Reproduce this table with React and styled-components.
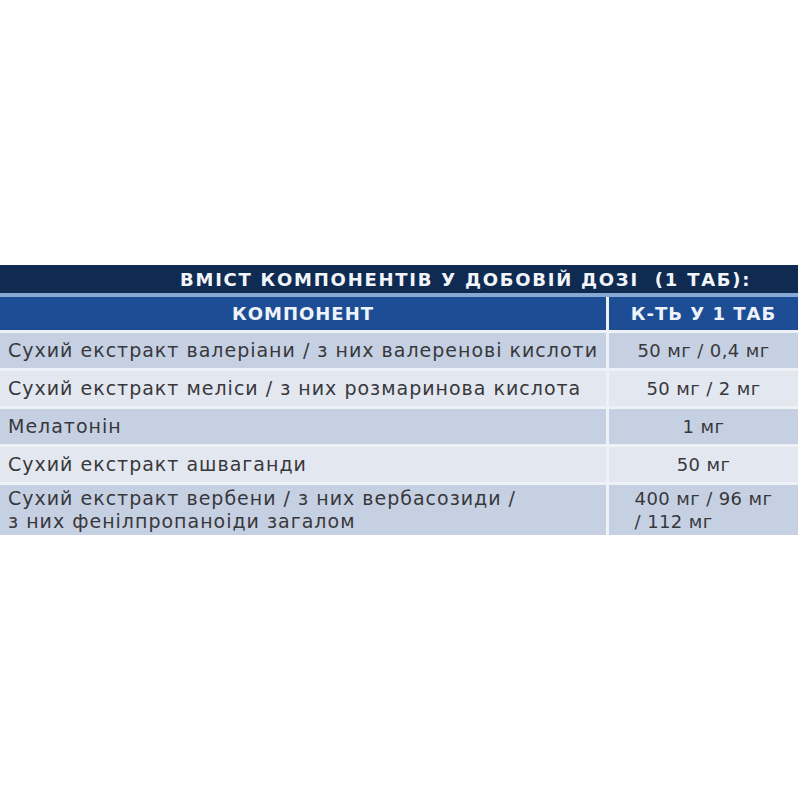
import React from "react";
import styled, { createGlobalStyle } from "styled-components";

const GlobalStyle = createGlobalStyle`
    html, body {
        margin: 0;
        padding: 0;
        background: #ffffff;
    }
    body {
        font-family: "DejaVu Sans", "Noto Sans", sans-serif;
    }
`;

const Page = styled.div`
    width: 800px;
    height: 800px;
    padding-top: 265px;
    box-sizing: border-box;
`;

const Table = styled.div`
    width: 798px;
`;

const Title = styled.div`
    height: 28px;
    background: #0f2b52;
    border-bottom: 4px solid #86a9d4;
    color: #f2f5fa;
    font-weight: 700;
    font-size: 18px;
    letter-spacing: 1.75px;
    display: flex;
    align-items: center;
    padding-left: 180px;
    white-space: pre;
`;

const Grid = styled.div`
    display: grid;
    grid-template-columns: 606px 189px;
    column-gap: 3px;
    row-gap: 3px;
    background: #eef1f6;
`;

const HeadCell = styled.div`
    height: 33px;
    background: #1d4d95;
    color: #eef3fa;
    font-weight: 700;
    font-size: 18px;
    letter-spacing: 1px;
    display: flex;
    align-items: center;
    justify-content: center;
`;

const Cell = styled.div`
    min-height: ${(p) => (p.$tall ? "50px" : "35px")};
    background: ${(p) => (p.$shade ? "#c6d0e3" : "#e3e7f0")};
    color: #38383b;
    font-size: ${(p) => (p.$center ? "18px" : "19px")};
    letter-spacing: ${(p) => (p.$center ? "0.4px" : "1px")};
    line-height: 23px;
    display: flex;
    align-items: ${(p) => (p.$tall ? "flex-start" : "center")};
    justify-content: ${(p) => (p.$center ? "center" : "flex-start")};
    padding: ${(p) => (p.$tall ? "2px 0 0 8px" : "0 0 0 8px")};
    padding-left: ${(p) => (p.$center ? "0" : "8px")};
    box-sizing: border-box;
`;

const Amount = styled.span`
    display: inline-block;
    text-align: left;
`;

const rows = [
    ["Сухий екстракт валеріани / з них валеренові кислоти", "50 мг / 0,4 мг"],
    ["Сухий екстракт меліси / з них розмаринова кислота", "50 мг / 2 мг"],
    ["Мелатонін", "1 мг"],
    ["Сухий екстракт ашваганди", "50 мг"],
];

export default function App() {
    return (
        <Page>
            <GlobalStyle />
            <Table>
                <Title>{"ВМІСТ КОМПОНЕНТІВ У ДОБОВІЙ ДОЗІ  (1 ТАБ):"}</Title>
                <Grid>
                    <HeadCell>КОМПОНЕНТ</HeadCell>
                    <HeadCell>К-ТЬ У 1 ТАБ</HeadCell>
                    {rows.map(([name, amount], i) => (
                        <React.Fragment key={name}>
                            <Cell $shade={i % 2 === 0}>{name}</Cell>
                            <Cell $shade={i % 2 === 0} $center>
                                {amount}
                            </Cell>
                        </React.Fragment>
                    ))}
                    <Cell $shade $tall>
                        <span>
                            Сухий екстракт вербени / з них вербасозиди /
                            <br />з них фенілпропаноіди загалом
                        </span>
                    </Cell>
                    <Cell $shade $tall $center>
                        <Amount>
                            400 мг / 96 мг
                            <br />/ 112 мг
                        </Amount>
                    </Cell>
                </Grid>
            </Table>
        </Page>
    );
}
